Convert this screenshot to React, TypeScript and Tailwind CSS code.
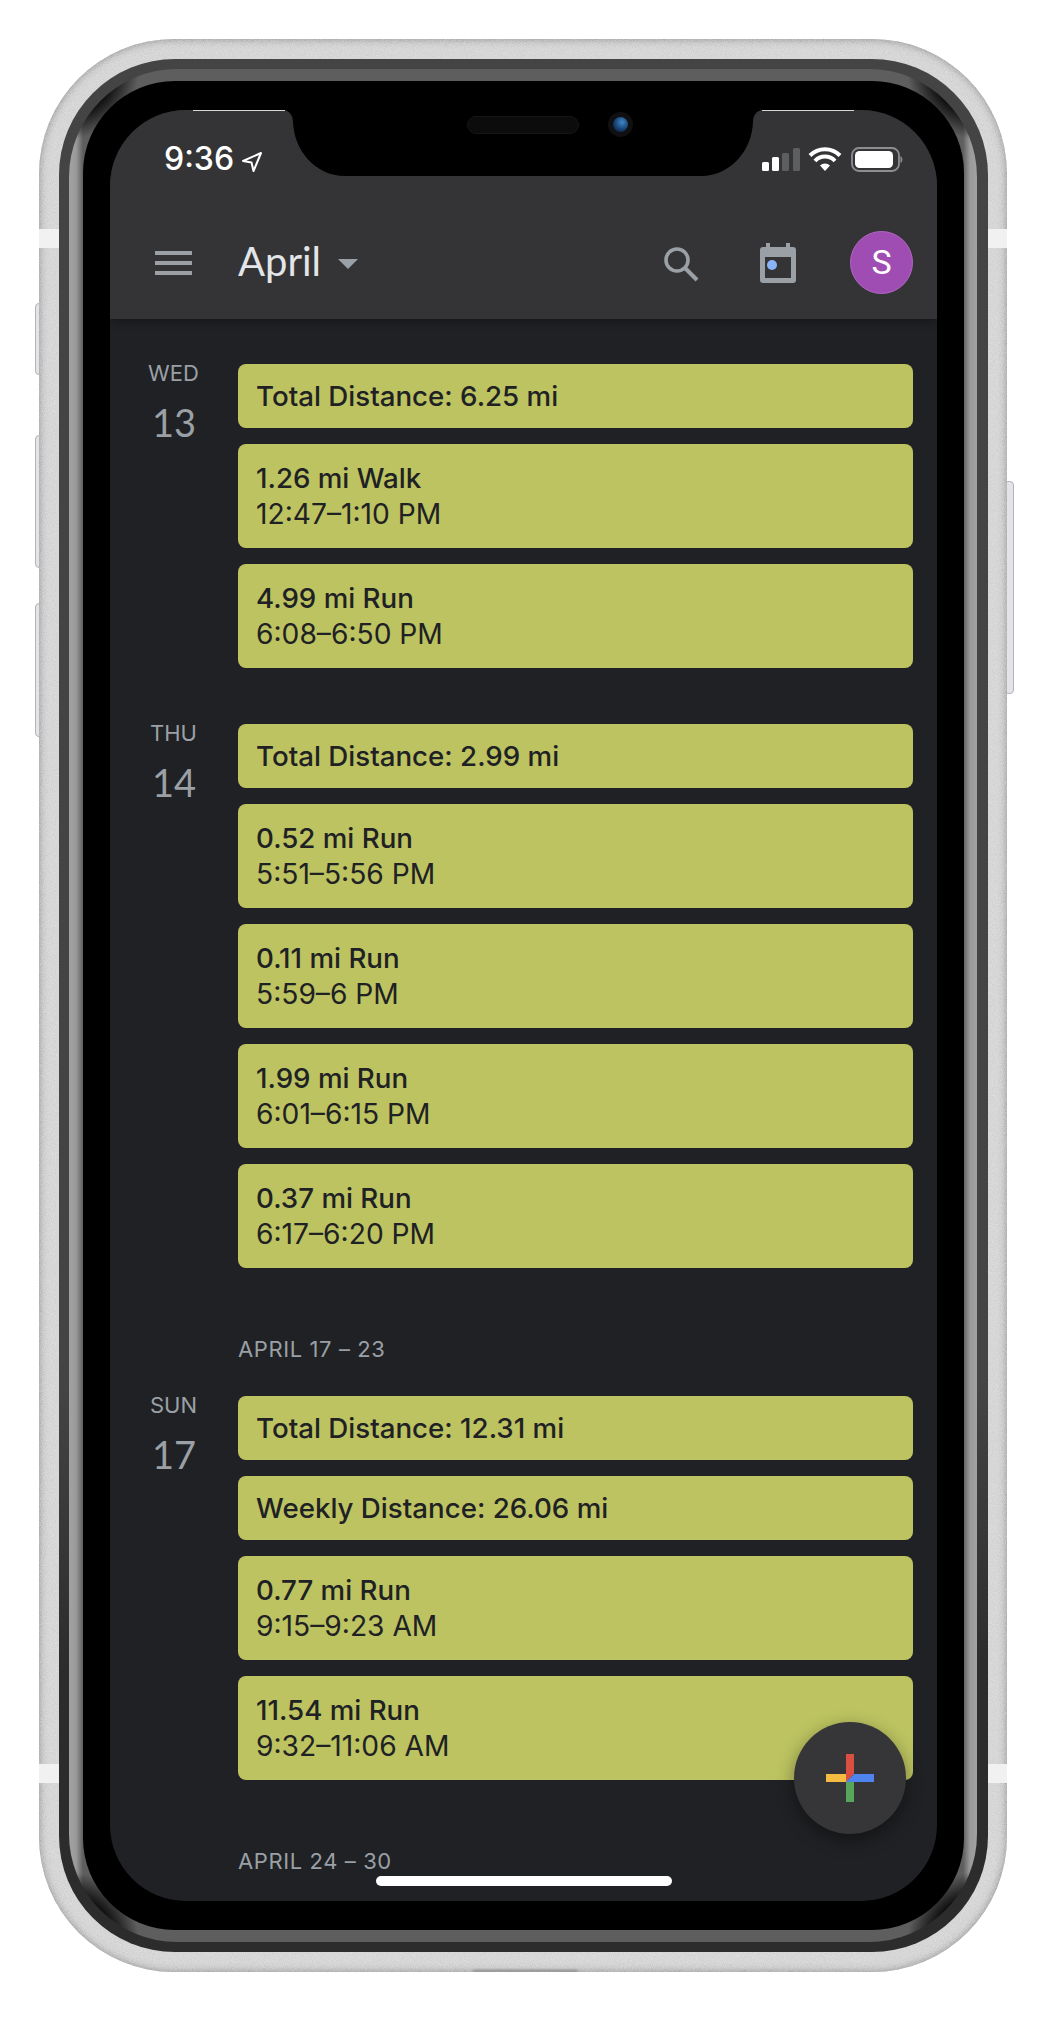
import React from "react";

interface CalEvent {
  title: string;
  time?: string;
}

interface Day {
  name: string;
  date: string;
  events: CalEvent[];
}

const WED: Day = {
  name: "WED",
  date: "13",
  events: [
    { title: "Total Distance: 6.25 mi" },
    { title: "1.26 mi Walk", time: "12:47–1:10 PM" },
    { title: "4.99 mi Run", time: "6:08–6:50 PM" },
  ],
};

const THU: Day = {
  name: "THU",
  date: "14",
  events: [
    { title: "Total Distance: 2.99 mi" },
    { title: "0.52 mi Run", time: "5:51–5:56 PM" },
    { title: "0.11 mi Run", time: "5:59–6 PM" },
    { title: "1.99 mi Run", time: "6:01–6:15 PM" },
    { title: "0.37 mi Run", time: "6:17–6:20 PM" },
  ],
};

const SUN: Day = {
  name: "SUN",
  date: "17",
  events: [
    { title: "Total Distance: 12.31 mi" },
    { title: "Weekly Distance: 26.06 mi" },
    { title: "0.77 mi Run", time: "9:15–9:23 AM" },
    { title: "11.54 mi Run", time: "9:32–11:06 AM" },
  ],
};

const EventCard: React.FC<{ event: CalEvent }> = ({ event }) => (
  <div
    className={`flex flex-col justify-center rounded-[8px] bg-[#bcc360] pl-[18px] text-[#202124] ${
      event.time ? "h-[104px]" : "h-[64px]"
    }`}
  >
    <div className="text-[27.7px] leading-[36px] font-[450]">{event.title}</div>
    {event.time && <div className="text-[28.2px] leading-[36px]">{event.time}</div>}
  </div>
);

const DayGroup: React.FC<{ day: Day }> = ({ day }) => (
  <section className="flex">
    <div className="flex w-[128px] shrink-0 flex-col items-center text-[#9aa0a6]">
      <div className="-mt-[3px] pr-[1px] text-[22px] leading-[24px]">{day.name}</div>
      <div className="mt-[17px] font-['Lato'] text-[38px] leading-[40px]">{day.date}</div>
    </div>
    <div className="flex flex-1 flex-col gap-[16px] pr-[24px]">
      {day.events.map((e) => (
        <EventCard key={e.title} event={e} />
      ))}
    </div>
  </section>
);

const WeekLabel: React.FC<{ text: string }> = ({ text }) => (
  <div className="mt-[66px] mb-[32px] pl-[128px] text-[22px] leading-[30px] tracking-[0.6px] text-[#9aa0a6]">
    {text}
  </div>
);

const SideButton: React.FC<{ className: string }> = ({ className }) => (
  <div className={`absolute w-[10px] rounded-[4px] border border-[#b4b4b8] bg-[#e4e4e8] ${className}`} />
);

const StatusIcons = () => (
  <svg width="141" height="26" viewBox="0 0 141 26" className="mt-[37px] mr-[34px]">
    <rect x="0" y="15" width="7" height="9" rx="1.5" fill="#fff" />
    <rect x="10" y="10" width="7" height="14" rx="1.5" fill="#fff" />
    <rect x="20" y="6" width="7" height="18" rx="1.5" fill="#5d5e60" />
    <rect x="31" y="1" width="7" height="23" rx="1.5" fill="#5d5e60" />
    <path d="M63 24 L58 18.5 A7.5 7.5 0 0 1 68 18.5 Z" fill="#fff" />
    <path d="M53 14 A13.5 13.5 0 0 1 73 14" stroke="#fff" strokeWidth="4" fill="none" />
    <path d="M48 8.5 A21 21 0 0 1 78 8.5" stroke="#fff" strokeWidth="4" fill="none" />
    <rect x="90" y="1" width="47" height="23" rx="7" stroke="#8d8e90" strokeWidth="1.8" fill="none" />
    <rect x="93" y="4" width="38" height="17" rx="4.5" fill="#fff" />
    <path d="M138.5 9 C141 10 141 15 138.5 16 Z" fill="#8d8e90" />
  </svg>
);

const Notch = () => (
  <div className="absolute top-0 left-[173px] z-20 h-[66px] w-[480px]">
    <svg width="480" height="66" viewBox="0 0 480 66" className="absolute inset-0">
      <path
        d="M0 0 C6 0 10 5 10 12 C11 40 32 66 62 66 L418 66 C448 66 469 40 470 12 C470 5 474 0 480 0 Z"
        fill="#000"
      />
    </svg>
    <div className="absolute top-[6px] left-[184px] h-[18px] w-[112px] rounded-full border border-[#161616] bg-[#0c0c0c]" />
    <div className="absolute top-[2px] left-[325px] flex h-[25px] w-[25px] items-center justify-center rounded-full bg-[#101012]">
      <div className="h-[15px] w-[15px] rounded-full bg-[radial-gradient(circle_at_60%_35%,#3f86c9,#123a68_60%,#0a1a30)]" />
    </div>
  </div>
);

const Header = () => (
  <header className="relative z-10 flex h-[209px] shrink-0 flex-col bg-[#343436] shadow-[0_3px_8px_rgba(0,0,0,0.28)]">
    <div className="flex h-[99px] shrink-0 justify-between">
      <div className="flex items-start pt-[31px] pl-[54px]">
        <span className="text-[32px] leading-[36px] font-medium text-white">9:36</span>
        <svg width="22" height="22" viewBox="0 0 22 22" className="mt-[10px] ml-[7px]">
          <path d="M2 10 L20 2 L12.5 20 L10.5 11.5 Z" fill="none" stroke="#fff" strokeWidth="2" strokeLinejoin="round" />
        </svg>
      </div>
      <StatusIcons />
    </div>
    <div className="flex h-[110px] items-center pr-[24px] pb-[3px] pl-[45px]">
      <div className="flex w-[37px] flex-col gap-[6px]">
        <div className="h-[4px] bg-[#9aa0a6]" />
        <div className="h-[4px] bg-[#9aa0a6]" />
        <div className="h-[4px] bg-[#9aa0a6]" />
      </div>
      <span className="mb-[3px] ml-[46px] font-['Lato'] text-[40px] leading-[44px] text-[#e3e5e8]">April</span>
      <svg width="20" height="10" viewBox="0 0 20 10" className="mt-[3px] ml-[17px]">
        <path d="M0 0 H20 L10 10 Z" fill="#9aa0a6" />
      </svg>
      <svg width="36" height="36" viewBox="0 0 36 36" className="mt-[2px] ml-auto">
        <circle cx="14" cy="14" r="11" fill="none" stroke="#9aa0a6" strokeWidth="3.6" />
        <path d="M22 22 L34 34" stroke="#9aa0a6" strokeWidth="4" />
      </svg>
      <svg width="36" height="40" viewBox="0 0 36 40" className="ml-[61px]">
        <path d="M6 0 H10 V4 H26 V0 H30 V4 H33 A3 3 0 0 1 36 7 V37 A3 3 0 0 1 33 40 H3 A3 3 0 0 1 0 37 V7 A3 3 0 0 1 3 4 H6 Z" fill="#9aa0a6" />
        <rect x="5" y="14" width="26" height="21" fill="#343436" />
        <circle cx="12" cy="22" r="5" fill="#8ab4f8" />
      </svg>
      <div className="ml-[54px] flex h-[63px] w-[63px] items-center justify-center rounded-full border border-[#b067c2] bg-[#a04db3] font-['Roboto'] text-[34px] text-white">
        S
      </div>
    </div>
  </header>
);

const Fab = () => (
  <div className="absolute right-[31px] bottom-[67px] z-20 flex h-[112px] w-[112px] items-center justify-center rounded-full bg-[#363638] shadow-[0_6px_18px_rgba(0,0,0,0.4)]">
    <svg width="48" height="48" viewBox="0 0 48 48">
      <rect x="0" y="20" width="22" height="8" fill="#f4bd42" />
      <rect x="20" y="26" width="8" height="22" fill="#58a65c" />
      <path d="M20 0 H28 V20 L20 28 Z" fill="#db4f40" />
      <path d="M48 20 V28 H20 L28 20 Z" fill="#4f84ee" />
    </svg>
  </div>
);

// brushed metal grain on the silver band
const Grain = () => (
  <svg className="absolute inset-0 h-full w-full opacity-40">
    <filter id="grain">
      <feTurbulence type="fractalNoise" baseFrequency="1.1" numOctaves="2" />
      <feColorMatrix values="0 0 0 0 1  0 0 0 0 1  0 0 0 0 1  1.4 0 0 0 -0.3" />
    </filter>
    <rect width="100%" height="100%" filter="url(#grain)" />
  </svg>
);

export default function App() {
  return (
    <div className="relative h-[2025px] w-[1048px] overflow-hidden bg-white pt-[39px] pl-[39px] font-['Inter',sans-serif]">
      <SideButton className="top-[303px] left-[35px] h-[72px]" />
      <SideButton className="top-[435px] left-[35px] h-[133px]" />
      <SideButton className="top-[603px] left-[35px] h-[134px]" />
      <SideButton className="top-[481px] left-[1004px] h-[213px]" />

      {/* silver band */}
      <div className="relative h-[1933px] w-[968px] overflow-hidden rounded-[135px] bg-[#cfcfcf] py-[20px] pr-[19px] pl-[20px] shadow-[inset_0_0_8px_#7a7a7a]">
        <Grain />
        <div className="absolute top-[190px] left-0 h-[19px] w-full bg-[#f1f1f1]" />
        <div className="absolute top-[1725px] left-0 h-[19px] w-full bg-[#f1f1f1]" />
        <div className="absolute bottom-0 left-[434px] h-[2px] w-[105px] rounded-full bg-[#8a8a8a] blur-[1px]" />

        {/* inner dark bezel */}
        <div className="relative h-full w-full rounded-[116px] bg-[linear-gradient(180deg,#444444_70%,#2c2c2c_85%)] py-[10px] pr-[11px] pl-[10px]">
          <div className="h-full w-full rounded-[108px] bg-[radial-gradient(circle_at_0_0,#0c0c0c_44px,transparent_70px),radial-gradient(circle_at_100%_0,#0c0c0c_44px,transparent_70px),radial-gradient(circle_at_0_100%,#0c0c0c_44px,transparent_70px),radial-gradient(circle_at_100%_100%,#0c0c0c_44px,transparent_70px),linear-gradient(90deg,#a2a2a2_0,#9a9a9a_7px,#5e5e5e_14px,#5e5e5e_calc(100%-14px),#9a9a9a_calc(100%-7px),#a2a2a2_100%)] pt-[12px] pr-[13px] pb-[12px] pl-[14px]">
            <div className="h-full w-full rounded-[92px] bg-black pt-[29px] pr-[27px] pb-[29px] pl-[27px]">
              {/* screen */}
              <div className="relative flex h-full w-full flex-col overflow-hidden rounded-[76px] bg-[#202124]">
                <div className="absolute top-0 left-[83px] z-30 h-px w-[92px] bg-white/80" />
                <div className="absolute top-0 right-[83px] z-30 h-px w-[92px] bg-white/80" />
                <Notch />
                <Header />
                <main className="flex-1 overflow-hidden pt-[45px]">
                  <DayGroup day={WED} />
                  <div className="h-[56px]" />
                  <DayGroup day={THU} />
                  <WeekLabel text="APRIL 17 – 23" />
                  <DayGroup day={SUN} />
                  <WeekLabel text="APRIL 24 – 30" />
                </main>
                <Fab />
                <div className="absolute bottom-[15px] left-[266px] z-20 h-[10px] w-[296px] rounded-full bg-white" />
              </div>
            </div>
          </div>
        </div>
      </div>
    </div>
  );
}
